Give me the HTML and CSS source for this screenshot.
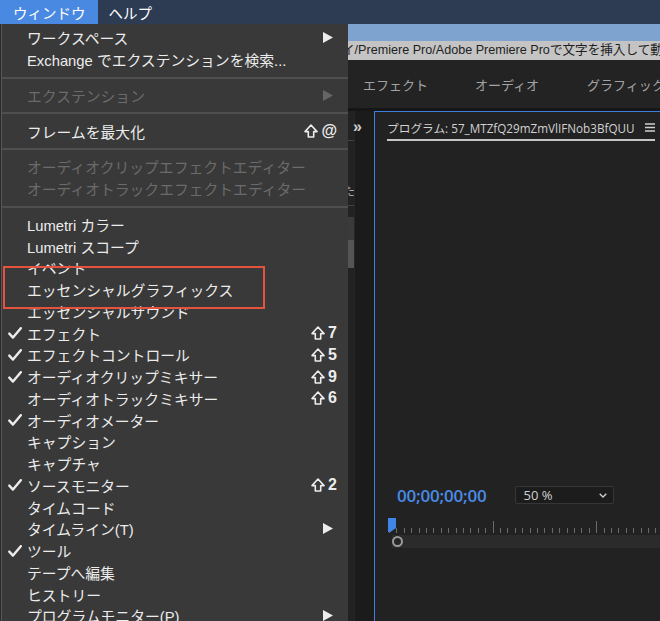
FILE: index.html
```html
<!DOCTYPE html>
<html lang="ja">
<head>
<meta charset="utf-8">
<title>Premiere Pro ウィンドウメニュー</title>
<link rel="stylesheet" href="styles.css">
</head>
<body>
<div class="menubar">
  <div class="mb-item active">ウィンドウ</div>
  <div class="mb-item">ヘルプ</div>
</div>

<div class="app">
  <div class="app-covered"></div>
  <div class="app-main">
    <div class="titlebar"></div>
    <div class="pathbar">イ/Premiere Pro/Adobe Premiere Proで文字を挿入して動</div>
    <div class="tabs">
      <div class="tab">エフェクト</div>
      <div class="tab">オーディオ</div>
      <div class="tab">グラフィック</div>
    </div>
    <div class="gapline"></div>
    <div class="workarea">
      <div class="strip">
        <div class="edge">
          <div class="edge-line first"></div>
          <div class="edge-text">た</div>
          <div class="edge-line"></div>
          <div class="edge-box"></div>
          <div class="edge-box light"></div>
        </div>
        <div class="gutter"><span class="chev">»</span></div>
      </div>
      <div class="panel">
        <div class="panel-head">
          <span>プログラム: 57_MTZfQ29mZmVlIFNob3BfQUU</span>
          <svg class="burger" width="10" height="9" viewBox="0 0 10 9"><path d="M0 1h10M0 4.5h10M0 8h10" stroke="#cfcfcf" stroke-width="1.4"/></svg>
        </div>
        <div class="video"></div>
        <div class="controls">
          <div class="tc-row">
            <span class="tc">00;00;00;00</span>
            <div class="zoomsel">
              <span>50 %</span>
              <svg width="8" height="5" viewBox="0 0 8 5"><path d="M0.7 0.7 L4 4 L7.3 0.7" fill="none" stroke="#d0d0d0" stroke-width="1.3"/></svg>
            </div>
          </div>
          <div class="ruler">
            <div class="ticks"></div>
            <div class="playhead"></div>
          </div>
          <div class="scrub">
            <div class="knob"></div>
          </div>
        </div>
      </div>
    </div>
  </div>
</div>

<div class="menu">
  <div class="mi"><span class="ck"></span><span class="lb">ワークスペース</span><svg class="sub" width="10" height="11" viewBox="0 0 10 11"><path d="M0 0 L10 5.5 L0 11 Z" fill="#ececec"/></svg></div>
  <div class="mi"><span class="ck"></span><span class="lb">Exchange でエクステンションを検索...</span></div>
  <div class="sep"></div>
  <div class="mi dis"><span class="ck"></span><span class="lb">エクステンション</span><svg class="sub" width="10" height="11" viewBox="0 0 10 11"><path d="M0 0 L10 5.5 L0 11 Z" fill="#666"/></svg></div>
  <div class="sep"></div>
  <div class="mi"><span class="ck"></span><span class="lb">フレームを最大化</span><span class="sc"><svg class="shift" width="14" height="14" viewBox="0 0 14 14"><path d="M7 1 L13 7.6 H9.7 V13 H4.3 V7.6 H1 Z" fill="none" stroke="#ececec" stroke-width="1.6" stroke-linejoin="round"/></svg>@</span></div>
  <div class="sep"></div>
  <div class="mi dis"><span class="ck"></span><span class="lb">オーディオクリップエフェクトエディター</span></div>
  <div class="mi dis"><span class="ck"></span><span class="lb">オーディオトラックエフェクトエディター</span></div>
  <div class="sep"></div>
  <div class="mi"><span class="ck"></span><span class="lb">Lumetri カラー</span></div>
  <div class="mi"><span class="ck"></span><span class="lb">Lumetri スコープ</span></div>
  <div class="mi"><span class="ck"></span><span class="lb">イベント</span></div>
  <div class="mi"><span class="ck"></span><span class="lb">エッセンシャルグラフィックス</span></div>
  <div class="mi"><span class="ck"></span><span class="lb">エッセンシャルサウンド</span></div>
  <div class="mi"><span class="ck"><svg width="14" height="12" viewBox="0 0 14 12"><path d="M1.3 6.6 L5 10.6 L12.8 1.2" fill="none" stroke="#ececec" stroke-width="2.4" stroke-linecap="round" stroke-linejoin="round"/></svg></span><span class="lb">エフェクト</span><span class="sc"><svg class="shift" width="14" height="14" viewBox="0 0 14 14"><path d="M7 1 L13 7.6 H9.7 V13 H4.3 V7.6 H1 Z" fill="none" stroke="#ececec" stroke-width="1.6" stroke-linejoin="round"/></svg>7</span></div>
  <div class="mi"><span class="ck"><svg width="14" height="12" viewBox="0 0 14 12"><path d="M1.3 6.6 L5 10.6 L12.8 1.2" fill="none" stroke="#ececec" stroke-width="2.4" stroke-linecap="round" stroke-linejoin="round"/></svg></span><span class="lb">エフェクトコントロール</span><span class="sc"><svg class="shift" width="14" height="14" viewBox="0 0 14 14"><path d="M7 1 L13 7.6 H9.7 V13 H4.3 V7.6 H1 Z" fill="none" stroke="#ececec" stroke-width="1.6" stroke-linejoin="round"/></svg>5</span></div>
  <div class="mi"><span class="ck"><svg width="14" height="12" viewBox="0 0 14 12"><path d="M1.3 6.6 L5 10.6 L12.8 1.2" fill="none" stroke="#ececec" stroke-width="2.4" stroke-linecap="round" stroke-linejoin="round"/></svg></span><span class="lb">オーディオクリップミキサー</span><span class="sc"><svg class="shift" width="14" height="14" viewBox="0 0 14 14"><path d="M7 1 L13 7.6 H9.7 V13 H4.3 V7.6 H1 Z" fill="none" stroke="#ececec" stroke-width="1.6" stroke-linejoin="round"/></svg>9</span></div>
  <div class="mi"><span class="ck"></span><span class="lb">オーディオトラックミキサー</span><span class="sc"><svg class="shift" width="14" height="14" viewBox="0 0 14 14"><path d="M7 1 L13 7.6 H9.7 V13 H4.3 V7.6 H1 Z" fill="none" stroke="#ececec" stroke-width="1.6" stroke-linejoin="round"/></svg>6</span></div>
  <div class="mi"><span class="ck"><svg width="14" height="12" viewBox="0 0 14 12"><path d="M1.3 6.6 L5 10.6 L12.8 1.2" fill="none" stroke="#ececec" stroke-width="2.4" stroke-linecap="round" stroke-linejoin="round"/></svg></span><span class="lb">オーディオメーター</span></div>
  <div class="mi"><span class="ck"></span><span class="lb">キャプション</span></div>
  <div class="mi"><span class="ck"></span><span class="lb">キャプチャ</span></div>
  <div class="mi"><span class="ck"><svg width="14" height="12" viewBox="0 0 14 12"><path d="M1.3 6.6 L5 10.6 L12.8 1.2" fill="none" stroke="#ececec" stroke-width="2.4" stroke-linecap="round" stroke-linejoin="round"/></svg></span><span class="lb">ソースモニター</span><span class="sc"><svg class="shift" width="14" height="14" viewBox="0 0 14 14"><path d="M7 1 L13 7.6 H9.7 V13 H4.3 V7.6 H1 Z" fill="none" stroke="#ececec" stroke-width="1.6" stroke-linejoin="round"/></svg>2</span></div>
  <div class="mi"><span class="ck"></span><span class="lb">タイムコード</span></div>
  <div class="mi"><span class="ck"></span><span class="lb">タイムライン(T)</span><svg class="sub" width="10" height="11" viewBox="0 0 10 11"><path d="M0 0 L10 5.5 L0 11 Z" fill="#ececec"/></svg></div>
  <div class="mi"><span class="ck"><svg width="14" height="12" viewBox="0 0 14 12"><path d="M1.3 6.6 L5 10.6 L12.8 1.2" fill="none" stroke="#ececec" stroke-width="2.4" stroke-linecap="round" stroke-linejoin="round"/></svg></span><span class="lb">ツール</span></div>
  <div class="mi"><span class="ck"></span><span class="lb">テープへ編集</span></div>
  <div class="mi"><span class="ck"></span><span class="lb">ヒストリー</span></div>
  <div class="mi"><span class="ck"></span><span class="lb">プログラムモニター(P)</span><svg class="sub" width="10" height="11" viewBox="0 0 10 11"><path d="M0 0 L10 5.5 L0 11 Z" fill="#ececec"/></svg></div>
</div>

<div class="highlight-box"></div>
</body>
</html>
```

FILE: styles.css
```css
* { box-sizing: border-box; }

body {
  margin: 0;
  width: 660px;
  height: 621px;
  overflow: hidden;
  position: relative;
  background: #1d1d1d;
  font-family: "Liberation Sans", "Noto Sans CJK JP", sans-serif;
}

/* top system menu bar */
.menubar {
  height: 24px;
  background: #2d3c52;
  display: flex;
  color: #ffffff;
  font-size: 14.5px;
}
.mb-item {
  display: flex;
  align-items: center;
  padding: 0 11px;
}
.mb-item.active {
  background: #4a89e1;
  padding: 0 12px 0 13px;
}

/* application window behind the menu */
.app {
  display: grid;
  grid-template-columns: 348px 1fr;
  height: 597px;
}
.app-covered { background: #2a2a2a; }
.app-main {
  display: flex;
  flex-direction: column;
  min-width: 0;
}
.titlebar {
  height: 17px;
  background: #7fa3cf;
}
.pathbar {
  height: 19px;
  background: #c4c4c4;
  color: #1e1e1e;
  font-size: 12.6px;
  line-height: 19px;
  white-space: nowrap;
  overflow: hidden;
  text-indent: -6px;
}
.tabs {
  height: 48px;
  background: #232323;
  display: flex;
  align-items: center;
  padding-left: 15px;
  overflow: hidden;
}
.tab {
  width: 112px;
  flex: none;
  color: #a3a3a3;
  font-size: 13px;
  white-space: nowrap;
}
.gapline {
  height: 3px;
  background: #161616;
}
.workarea {
  flex: 1;
  display: grid;
  grid-template-columns: 26px 1fr;
  min-height: 0;
}

/* strip between left panel and program monitor */
.strip {
  display: flex;
  background: #1b1b1b;
}
.edge {
  width: 7px;
  flex: none;
  display: flex;
  flex-direction: column;
  background: #222222;
  border-right: 1px solid #262626;
}
.edge-line {
  height: 1px;
  background: #444;
  margin-top: 3px;
}
.edge-line.first { margin-top: 29px; margin-bottom: 41px; }
.edge-text {
  height: 20px;
  font-size: 12px;
  line-height: 20px;
  color: #a8a8a8;
  overflow: hidden;
  white-space: nowrap;
  text-indent: -5px;
}
.edge-box {
  height: 23px;
  margin-top: 11px;
  background: #3a3a3a;
}
.edge-box.light {
  height: 28px;
  margin-top: 0;
  background: #555555;
}
.gutter {
  flex: 1;
  padding-top: 7px;
}
.chev {
  display: block;
  margin-left: -2px;
  color: #cfcfcf;
  font-size: 16px;
  font-weight: bold;
  line-height: 18px;
}

/* program monitor panel */
.panel {
  border-left: 1px solid #3d7fe0;
  border-top: 1px solid #3d7fe0;
  background: #222222;
  display: flex;
  flex-direction: column;
  min-width: 0;
}
.panel-head {
  margin: 0 5px 0 12px;
  height: 29px;
  padding-top: 3px;
  border-bottom: 2px solid #c6c6c6;
  display: flex;
  align-items: center;
  justify-content: space-between;
  color: #d2d2d2;
  font-size: 11.7px;
  white-space: nowrap;
  font-family: "Open Sans", "Noto Sans CJK JP", sans-serif;
}
.burger { flex: none; }
.video { flex: 1; }
.controls {
  height: 135px;
  display: flex;
  flex-direction: column;
}
.tc-row {
  height: 18px;
  display: flex;
  align-items: center;
  gap: 28px;
  margin-left: 22px;
}
.tc {
  color: #4a8be6;
  font-family: "Open Sans", sans-serif;
  font-weight: 600;
  font-size: 17px;
  letter-spacing: -0.2px;
}
.zoomsel {
  width: 99px;
  height: 18px;
  border: 1px solid #363636;
  border-radius: 2px;
  background: #1c1c1c;
  display: flex;
  align-items: center;
  justify-content: space-between;
  padding: 0 6px 0 8px;
  color: #d0d0d0;
  font-family: "Open Sans", sans-serif;
  font-size: 13px;
}
.ruler {
  position: relative;
  height: 15px;
  margin-top: 14px;
}
.ticks {
  height: 15px;
  margin-left: 14px;
  background:
    repeating-linear-gradient(90deg, #6a6a6a 0 1px, transparent 1px 7.4px) left bottom / 100% 5px no-repeat,
    repeating-linear-gradient(90deg, #6a6a6a 0 1px, transparent 1px 103.6px) left bottom / 100% 12px no-repeat;
}
.playhead {
  position: absolute;
  left: 13px;
  top: 0;
  width: 8px;
  height: 14px;
  background: #3f86e8;
  clip-path: polygon(0 0, 100% 0, 100% 72%, 30% 100%, 0 100%);
}
.scrub {
  position: relative;
  height: 13px;
  margin-top: 2px;
  margin-left: 17px;
  background: #2b2b2b;
}
.knob {
  position: absolute;
  left: 0;
  top: 1px;
  width: 11px;
  height: 11px;
  border: 2px solid #9a9a9a;
  border-radius: 50%;
  background: #262626;
}

/* dropdown menu */
.menu {
  position: absolute;
  left: 1px;
  top: 24px;
  width: 347px;
  height: 600px;
  padding-top: 3px;
  background: #393939;
  border-left: 1px solid #585858;
  color: #ececec;
  font-size: 14.8px;
}
.mi {
  height: 21.75px;
  display: flex;
  align-items: center;
  padding-right: 11px;
  white-space: nowrap;
}
.mi.dis { color: #6b6b6b; }
.ck {
  width: 25px;
  flex: none;
  display: flex;
  align-items: center;
  padding-left: 6px;
}
.lb { flex: 1; }
.sc {
  display: flex;
  align-items: center;
  gap: 3px;
  font-size: 16px;
  font-weight: bold;
}
.sub {
  margin-right: 4px;
  flex: none;
}
.sep {
  height: 14px;
  display: flex;
  align-items: center;
}
.sep::before {
  content: "";
  display: block;
  width: 100%;
  height: 2px;
  background: #4f4f4f;
}

/* annotation */
.highlight-box {
  position: absolute;
  left: 3px;
  top: 266px;
  width: 262px;
  height: 43px;
  border: 2px solid #e5533f;
}
```
